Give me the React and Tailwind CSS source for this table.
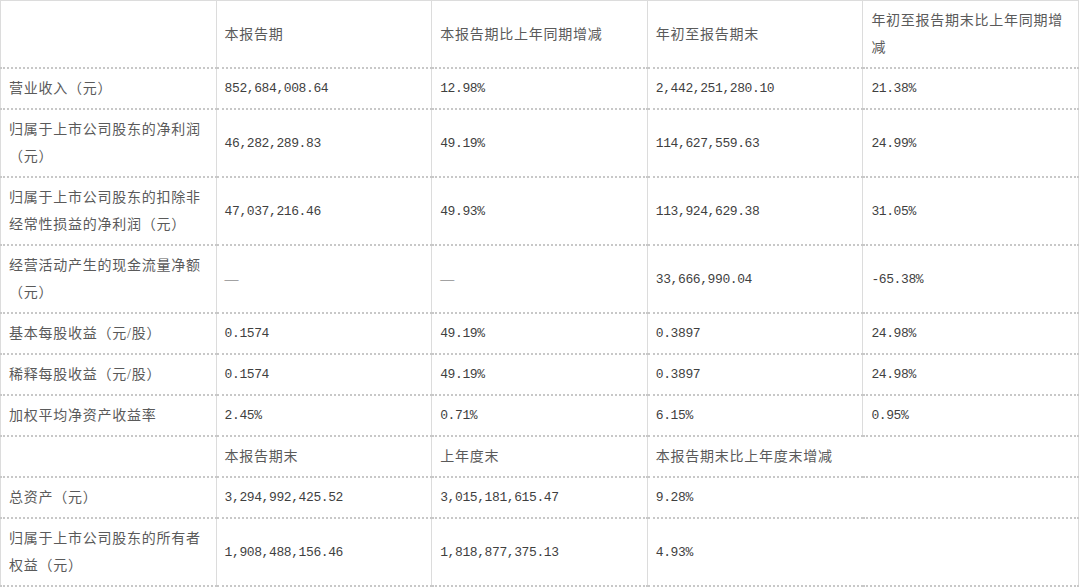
const cjk = "font-['Liberation_Serif','Noto_Sans_CJK_SC',serif] text-[14px] tracking-[0.75px]";
const num = "font-['Liberation_Mono','Noto_Sans_CJK_SC',monospace] text-[13px] tracking-[-0.4px]";

// each cell: [text, isNumber, colSpan]
const rows = [
  [['', 0], ['本报告期', 0], ['本报告期比上年同期增减', 0], ['年初至报告期末', 0], ['年初至报告期末比上年同期增减', 0]],
  [['营业收入（元）', 0], ['852,684,008.64', 1], ['12.98%', 1], ['2,442,251,280.10', 1], ['21.38%', 1]],
  [['归属于上市公司股东的净利润（元）', 0], ['46,282,289.83', 1], ['49.19%', 1], ['114,627,559.63', 1], ['24.99%', 1]],
  [['归属于上市公司股东的扣除非经常性损益的净利润（元）', 0], ['47,037,216.46', 1], ['49.93%', 1], ['113,924,629.38', 1], ['31.05%', 1]],
  [['经营活动产生的现金流量净额（元）', 0], ['—', 0], ['—', 0], ['33,666,990.04', 1], ['-65.38%', 1]],
  [['基本每股收益（元/股）', 0], ['0.1574', 1], ['49.19%', 1], ['0.3897', 1], ['24.98%', 1]],
  [['稀释每股收益（元/股）', 0], ['0.1574', 1], ['49.19%', 1], ['0.3897', 1], ['24.98%', 1]],
  [['加权平均净资产收益率', 0], ['2.45%', 1], ['0.71%', 1], ['6.15%', 1], ['0.95%', 1]],
  [['', 0], ['本报告期末', 0], ['上年度末', 0], ['本报告期末比上年度末增减', 0, 2]],
  [['总资产（元）', 0], ['3,294,992,425.52', 1], ['3,015,181,615.47', 1], ['9.28%', 1, 2]],
  [['归属于上市公司股东的所有者权益（元）', 0], ['1,908,488,156.46', 1], ['1,818,877,375.13', 1], ['4.93%', 1, 2]],
];

export default function App() {
  return (
    <div className="w-[1080px] h-[588px] bg-white overflow-hidden">
      <table className="w-[1079px] table-fixed border-collapse border-t border-[#dcdcdc] text-[#5a5a5a]">
        <colgroup>
          <col className="w-1/5" />
          <col className="w-1/5" />
          <col className="w-1/5" />
          <col className="w-1/5" />
          <col className="w-1/5" />
        </colgroup>
        <tbody>
          {rows.map((row, i) => (
            <tr key={i}>
              {row.map(([text, isNum, span], j) => (
                <td
                  key={j}
                  colSpan={span || 1}
                  className={`px-2 py-1.5 leading-[27px] align-middle text-left border-x border-x-[#dcdcdc] border-b-2 border-b-[#c8c8c8] [border-bottom-style:dotted]! ${
                    isNum ? num + ' text-[#3f3f3f]' : cjk
                  }`}
                >
                  {text}
                </td>
              ))}
            </tr>
          ))}
        </tbody>
      </table>
    </div>
  );
}
